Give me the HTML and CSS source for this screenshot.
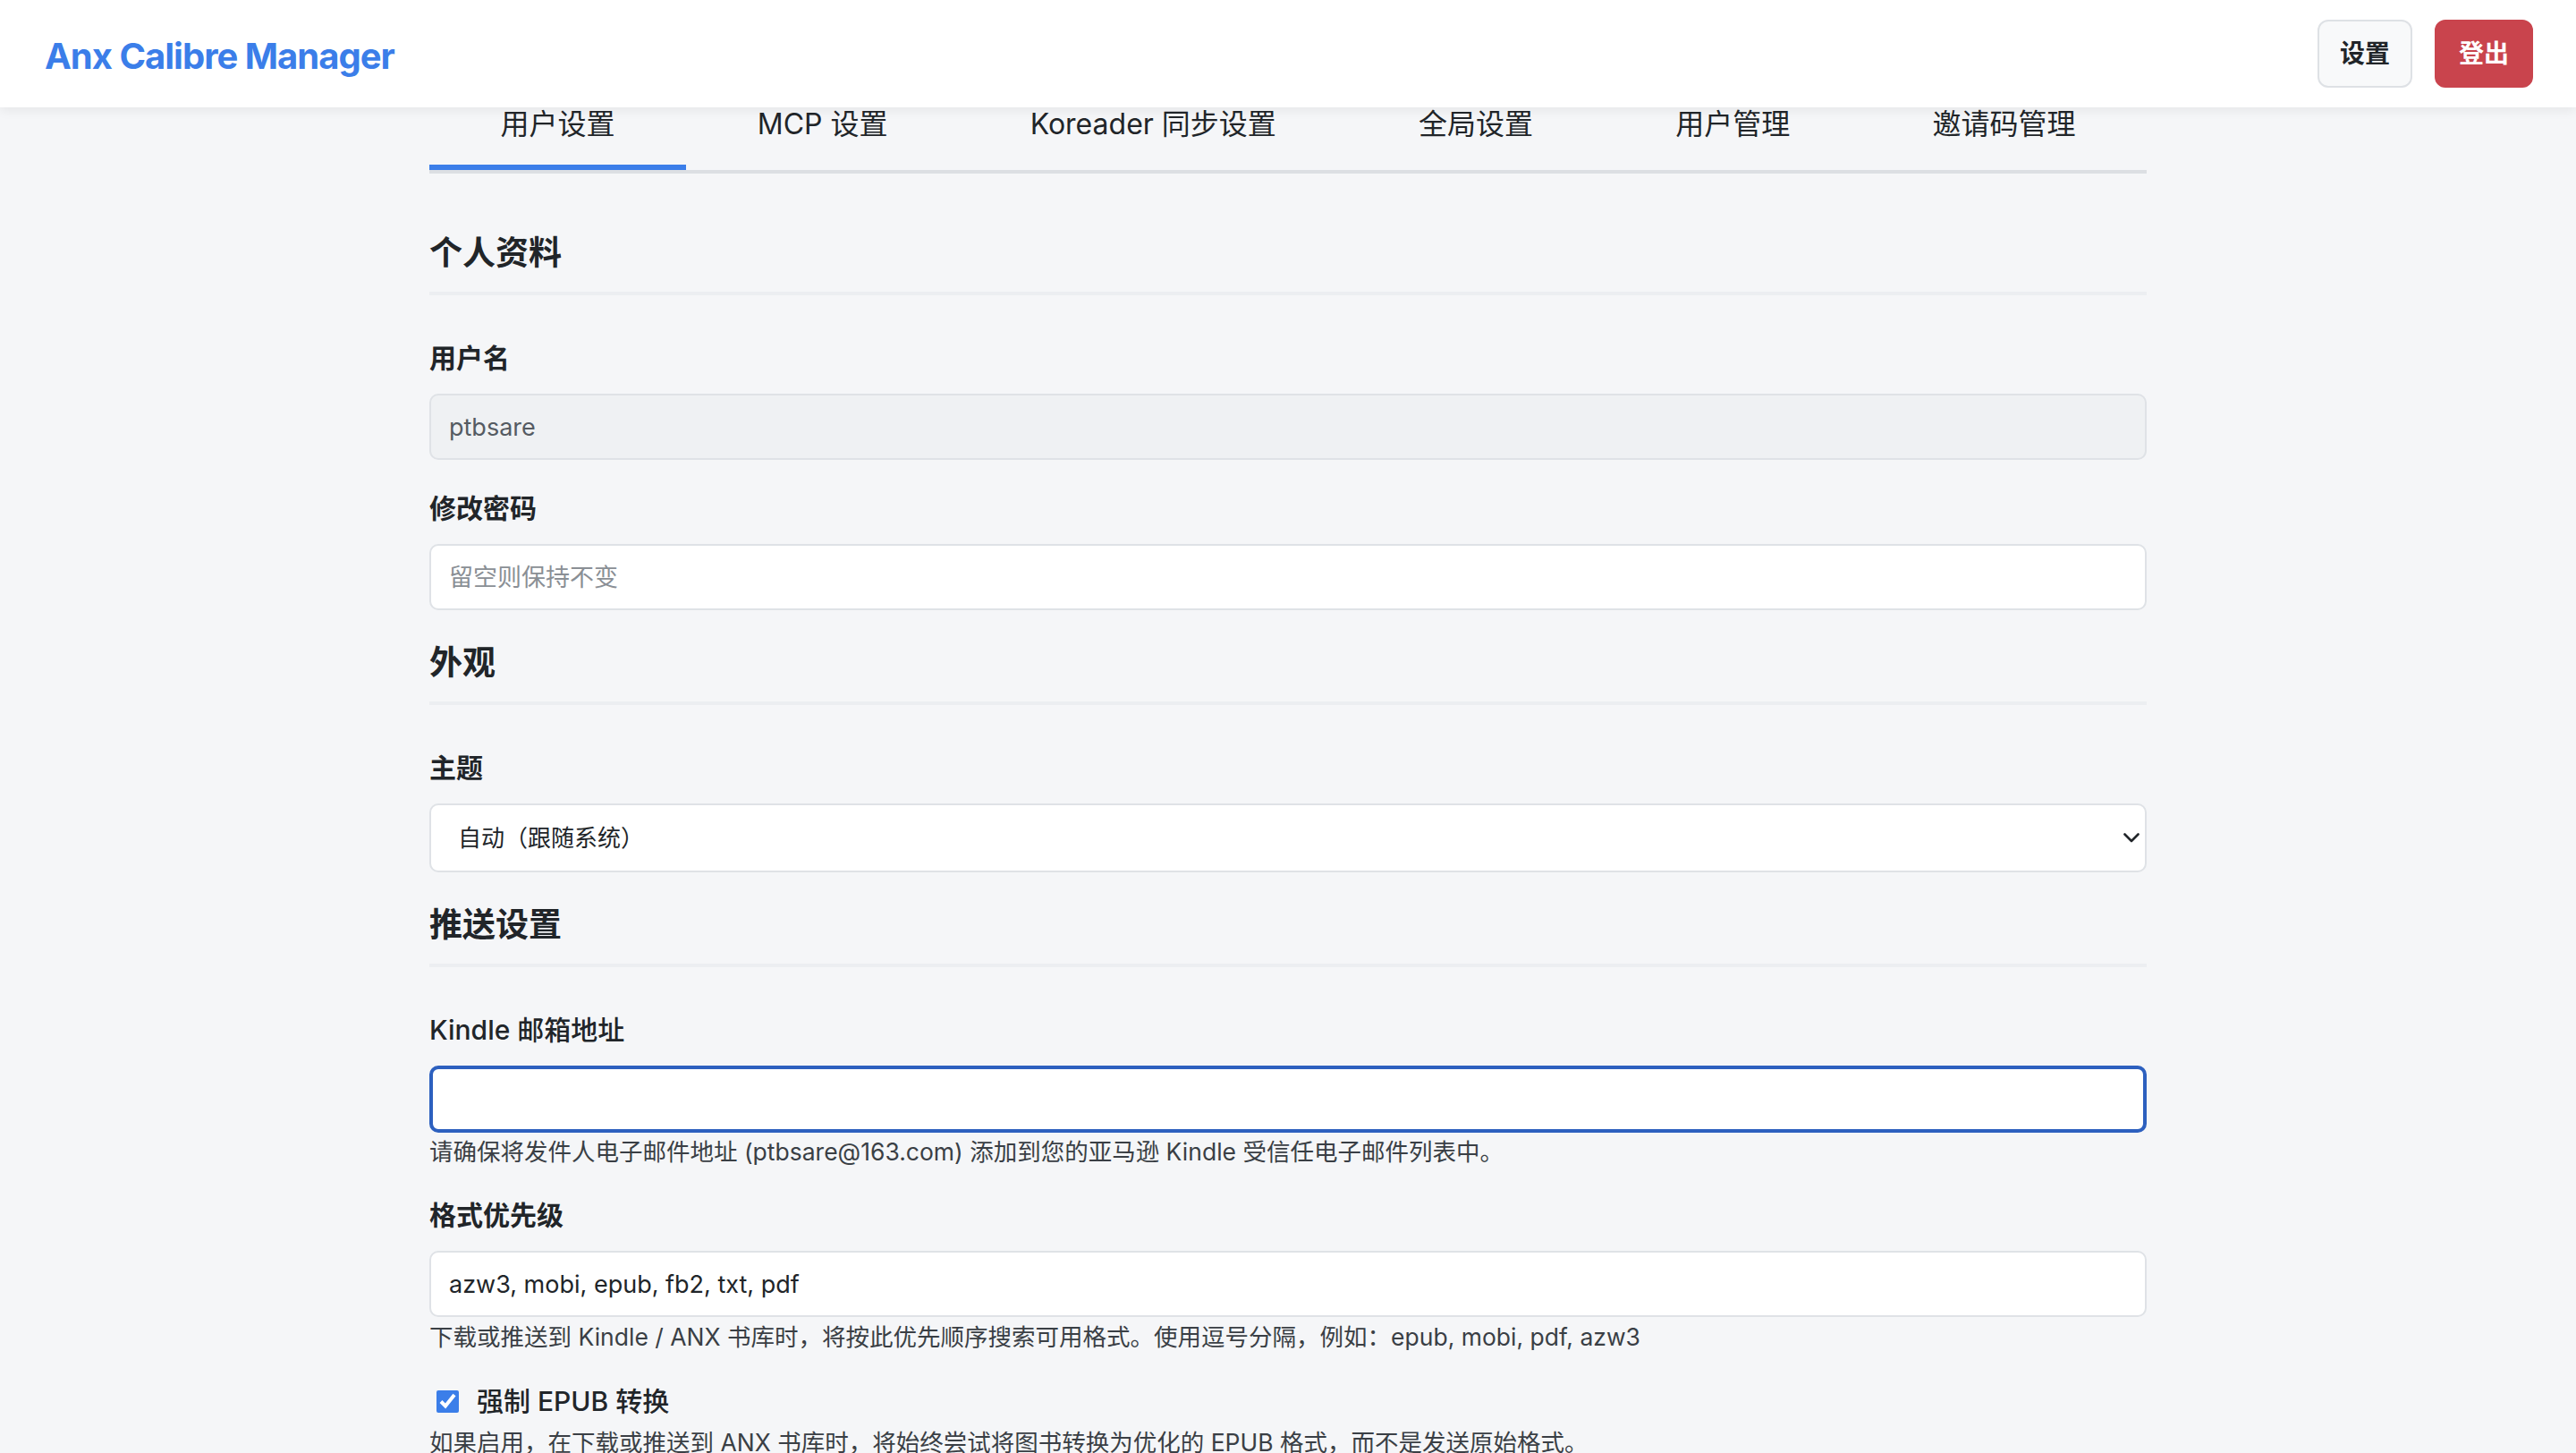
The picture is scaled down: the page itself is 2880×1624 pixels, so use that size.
FILE: index.html
```html
<!DOCTYPE html>
<html lang="zh-CN">
<head>
<meta charset="utf-8">
<title>Anx Calibre Manager</title>
<link rel="stylesheet" href="styles.css">
</head>
<body>
<header class="topbar">
  <div class="brand">Anx Calibre Manager</div>
  <div class="top-actions">
    <button class="btn btn-light">设置</button>
    <button class="btn btn-danger">登出</button>
  </div>
</header>
<main class="container">
  <nav class="tabs">
    <div class="tab active">用户设置</div>
    <div class="tab">MCP 设置</div>
    <div class="tab">Koreader 同步设置</div>
    <div class="tab">全局设置</div>
    <div class="tab">用户管理</div>
    <div class="tab">邀请码管理</div>
  </nav>

  <h2 class="section-title">个人资料</h2>
  <div class="form-group first">
    <label class="form-label">用户名</label>
    <input class="form-control readonly" type="text" value="ptbsare" readonly>
  </div>
  <div class="form-group">
    <label class="form-label">修改密码</label>
    <input class="form-control" type="password" placeholder="留空则保持不变">
  </div>

  <h2 class="section-title">外观</h2>
  <div class="form-group first">
    <label class="form-label">主题</label>
    <div class="select-wrap">
      <select class="form-select">
        <option>自动（跟随系统）</option>
        <option>浅色</option>
        <option>深色</option>
      </select>
      <svg class="chevron" width="18" height="11" viewBox="0 0 18 11"><path d="M1.5 1.5 L9 9 L16.5 1.5" fill="none" stroke="#212529" stroke-width="2.6" stroke-linecap="round" stroke-linejoin="round"/></svg>
    </div>
  </div>

  <h2 class="section-title">推送设置</h2>
  <div class="form-group first">
    <label class="form-label medium">Kindle 邮箱地址</label>
    <input class="form-control focused" type="email">
    <div class="form-text">请确保将发件人电子邮件地址 (ptbsare@163.com) 添加到您的亚马逊 Kindle 受信任电子邮件列表中。</div>
  </div>
  <div class="form-group tight">
    <label class="form-label">格式优先级</label>
    <input class="form-control" type="text" value="azw3, mobi, epub, fb2, txt, pdf">
    <div class="form-text close">下载或推送到 Kindle / ANX 书库时，将按此优先顺序搜索可用格式。使用逗号分隔，例如：epub, mobi, pdf, azw3</div>
  </div>
  <div class="form-group check-group">
    <div class="check-row">
      <input class="check" type="checkbox" checked>
      <span class="check-label">强制 EPUB 转换</span>
    </div>
    <div class="form-text desc">如果启用，在下载或推送到 ANX 书库时，将始终尝试将图书转换为优化的 EPUB 格式，而不是发送原始格式。</div>
  </div>
</main>
</body>
</html>
```

FILE: styles.css
```css
* { box-sizing: border-box; }

html, body {
  margin: 0;
  padding: 0;
}

body {
  background: #f5f6f8;
  color: #212529;
  font-family: "Inter", "Noto Sans CJK SC", sans-serif;
}

.topbar {
  position: relative;
  z-index: 2;
  height: 120px;
  background: #ffffff;
  box-shadow: 0 3px 12px rgba(0, 0, 0, 0.07);
  display: flex;
  align-items: center;
  justify-content: space-between;
  padding: 0 48px 0 50px;
}

.brand {
  font-size: 40px;
  font-weight: 700;
  letter-spacing: -1px;
  color: #3b7ee9;
  line-height: 1;
  margin-top: 6px;
}

.top-actions {
  display: flex;
  gap: 25px;
}

.btn {
  height: 76px;
  border-radius: 12px;
  font-family: "Inter", "Noto Sans CJK SC", sans-serif;
  font-size: 28px;
  font-weight: 700;
  line-height: 1;
  cursor: pointer;
}

.btn-light {
  background: #f8f9fa;
  border: 2px solid #dee1e5;
  color: #212529;
  padding: 0 23px;
}

.btn-danger {
  background: #c9444d;
  border: 2px solid #c9444d;
  color: #ffffff;
  padding: 0 25px;
}

.container {
  width: 1920px;
  margin: 0 auto;
  position: relative;
  z-index: 1;
}

.tabs {
  display: flex;
  border-bottom: 4px solid #dcdfe3;
}

.tab {
  flex: 1 1 auto;
  text-align: center;
  font-size: 32px;
  line-height: 34px;
  padding: 2px 70px 28px;
  border-bottom: 6px solid transparent;
  color: #212529;
  white-space: nowrap;
}

.tab.active {
  border-bottom-color: #3b7ee9;
}

.section-title {
  margin: 37px 0 0;
  font-size: 37px;
  line-height: 44px;
  font-weight: 700;
  padding-bottom: 21px;
  border-bottom: 4px solid #eceef1;
  color: #212529;
}

.tabs + .section-title {
  margin-top: 67px;
}

.form-group {
  margin-top: 36px;
}

.form-group.first {
  margin-top: 52px;
}

.form-group.tight {
  margin-top: 35px;
}

.form-group.check-group {
  margin-top: 36px;
}

.form-label {
  display: block;
  font-size: 30px;
  line-height: 36px;
  font-weight: 600;
  margin-bottom: 22px;
  color: #212529;
}

.form-label.medium {
  font-weight: 500;
}

.form-control,
.form-select {
  display: block;
  width: 100%;
  height: 74px;
  background: #ffffff;
  border: 2px solid #dfe2e6;
  border-radius: 10px;
  padding: 0 20px;
  font-family: "Inter", "Noto Sans CJK SC", sans-serif;
  font-size: 27px;
  color: #212529;
  outline: none;
}

.form-control::placeholder {
  color: #8a8f95;
}

.form-control.readonly {
  background: #eff1f3;
  color: #555b62;
}

.form-control.focused {
  height: 75px;
  border: 4px solid #2d60bf;
}

.select-wrap {
  position: relative;
}

.form-select {
  height: 77px;
  appearance: none;
  -webkit-appearance: none;
  padding: 0 30px;
  font-size: 26px;
}

.chevron {
  position: absolute;
  right: 8px;
  top: 33px;
  pointer-events: none;
}

.form-text {
  margin-top: 3px;
  font-size: 26.5px;
  line-height: 36px;
  color: #3a3f45;
}

.form-text.close {
  margin-top: 4px;
}

.check-row {
  display: flex;
  align-items: center;
  gap: 20px;
  height: 36px;
}

.check {
  width: 25px;
  height: 25px;
  margin: 0 0 0 8px;
  accent-color: #3b7ee9;
}

.check-label {
  font-size: 30px;
  line-height: 36px;
  font-weight: 500;
  color: #212529;
}

.form-text.desc {
  margin-top: 10px;
}
```
